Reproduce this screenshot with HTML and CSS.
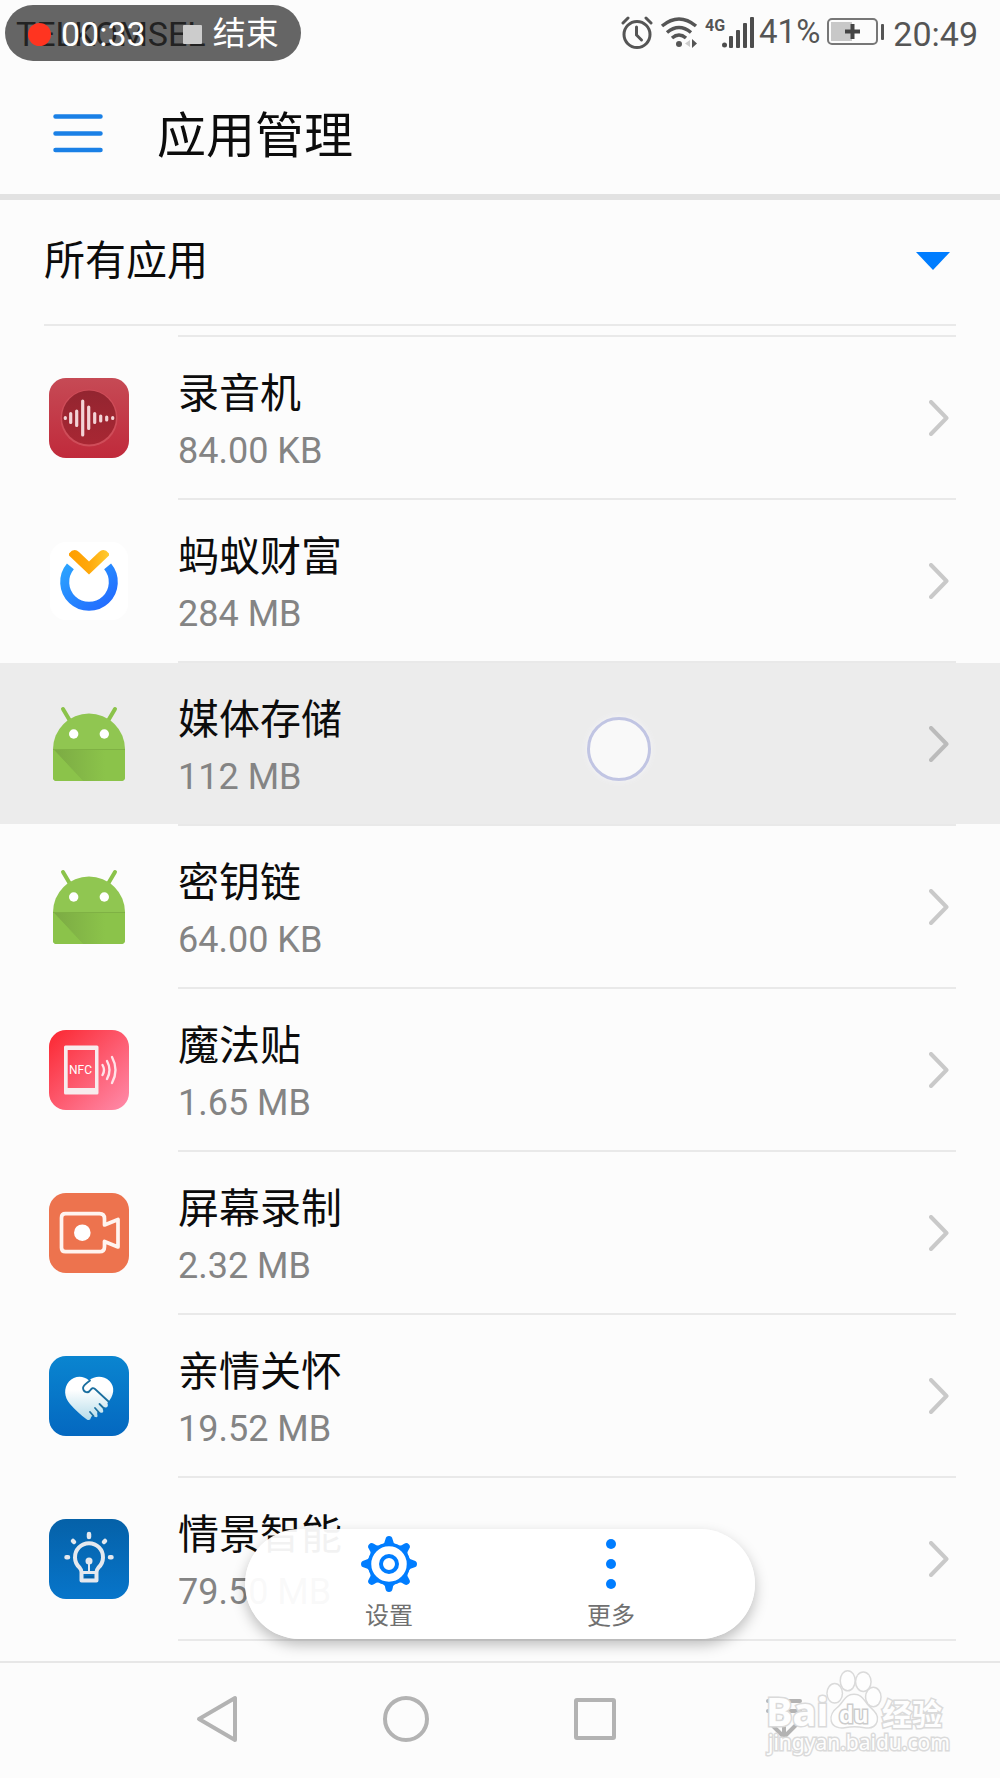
FILE: index.html
```html
<!DOCTYPE html>
<html lang="zh-CN">
<head>
<meta charset="utf-8">
<meta name="viewport" content="width=device-width, initial-scale=1">
<title>应用管理</title>
<link rel="stylesheet" href="styles.css">
</head>
<body>
<svg class="defs" width="0" height="0" aria-hidden="true">
  <defs>
    <linearGradient id="rec" x1="0" y1="0" x2="0" y2="1"><stop offset="0" stop-color="#c64a55"/><stop offset="1" stop-color="#c02a3b"/></linearGradient>
    <linearGradient id="recDisc" x1="0" y1="0" x2="0" y2="1"><stop offset="0" stop-color="#932530"/><stop offset="1" stop-color="#a82733"/></linearGradient>
    <linearGradient id="ring" x1="0" y1="0" x2="1" y2="1"><stop offset="0" stop-color="#2ba3ff"/><stop offset="1" stop-color="#2268ff"/></linearGradient>
    <linearGradient id="vee" x1="0" y1="0" x2="1" y2="0"><stop offset="0" stop-color="#ff9e00"/><stop offset=".5" stop-color="#ffa80a"/><stop offset="1" stop-color="#ffcb30"/></linearGradient>
    <linearGradient id="fold" x1="0" y1="0" x2="1" y2="0"><stop offset="0" stop-color="#7aa843"/><stop offset="1" stop-color="#8bc34a"/></linearGradient>
    <linearGradient id="nfc" x1="0" y1="0" x2="1" y2="1"><stop offset="0" stop-color="#fb2630"/><stop offset="1" stop-color="#ff8cab"/></linearGradient>
    <linearGradient id="care" x1="0" y1="0" x2="0" y2="1"><stop offset="0" stop-color="#0a85d0"/><stop offset="1" stop-color="#0468c0"/></linearGradient>
    <linearGradient id="hand" x1="0" y1="0" x2="0" y2="1"><stop offset=".3" stop-color="#fff"/><stop offset="1" stop-color="#b5dcea"/></linearGradient>
    <linearGradient id="smart" x1="0" y1="0" x2="0" y2="1"><stop offset="0" stop-color="#0561a8"/><stop offset="1" stop-color="#0775ca"/></linearGradient>
    <symbol id="chevron" viewBox="0 0 20 36"><path d="M2 2l15.500 16L2 34" fill="none" stroke="currentColor" stroke-width="4" stroke-linecap="round" stroke-linejoin="round"/></symbol>
    <symbol id="android" viewBox="0 0 80 80">
      <path d="M14 5l6.500 11M66 5l-6.500 11" stroke="#8bc34a" stroke-width="4" stroke-linecap="round"/>
      <path d="M4 45a36 35.500 0 0 1 72 0v28q0 4-4 4H8q-4 0-4-4z" fill="#90c651"/>
      <path d="M4 46h72v27q0 4-4 4H8q-4 0-4-4z" fill="#8bc34a"/>
      <path d="M5 46l29 31h22V46z" fill="url(#fold)" opacity=".9"/>
      <path d="M5 46l29 31H8q-4 0-4-4V46z" fill="#8bc34a"/>
      <path d="M4 45.500h72" stroke="#7fb144"/>
      <circle cx="24.700" cy="30" r="4.700" fill="#fff"/><circle cx="55.300" cy="30" r="4.700" fill="#fff"/>
    </symbol>
  </defs>
</svg>

<div class="status">
  <span class="carrier">TELKOMSEL</span>
  <div class="recorder">
    <span class="rec-dot"></span>
    <span>00:33</span>
    <button class="rec-stop" type="button"><span class="rec-square"></span>结束</button>
  </div>
  <div class="indicators">
    <svg width="32" height="34" viewBox="0 0 32 34" fill="none" stroke="#555" aria-label="闹钟">
      <circle cx="16" cy="19.500" r="13" stroke-width="3"/>
      <path d="M15.500 12v8l5 5" stroke-width="3" stroke-linecap="round"/>
      <path d="M2 8l5-5M30 8l-5-5" stroke-width="3" stroke-linecap="round"/>
    </svg>
    <svg width="38" height="34" viewBox="0 0 38 34" fill="none" stroke="#555" stroke-width="3.500" aria-label="WLAN">
      <path d="M2 11q17-14 34 0M7 17.500q12-10 24 0M12 23q7-6 14 0"/>
      <circle cx="19" cy="29" r="3" fill="#555" stroke="none"/>
      <path d="M32 24v9l5-4.500z" fill="#555" stroke="none"/><path d="M30 25v7l-5-3.500z" fill="#ccc" stroke="none"/>
    </svg>
    <div class="mobile">
      <svg width="50" height="34" viewBox="0 0 50 34" aria-label="信号">
        <text x="0" y="16" class="net">4G</text>
        <g fill="#4d4d4d"><circle cx="19.500" cy="30" r="2.500"/><rect x="24" y="21" width="4" height="12" rx="1"/><rect x="31" y="15" width="4" height="18" rx="1"/><rect x="38" y="8" width="4" height="25" rx="1"/><rect x="45" y="2" width="4" height="31" rx="1"/></g>
      </svg>
      <span class="percent">41%</span>
    </div>
    <svg width="58" height="28" viewBox="0 0 58 28" aria-label="充电中">
      <rect x="1" y="1" width="49" height="25" rx="4" fill="none" stroke="#777" stroke-width="2"/>
      <rect x="4" y="4" width="21" height="19" fill="#c8c8c8"/>
      <path d="M18 13.500h15M25.500 6v15" stroke="#444" stroke-width="4"/>
      <rect x="54" y="6" width="3" height="16" rx="1" fill="#555"/>
    </svg>
  </div>
  <time class="clock">20:49</time>
</div>

<header class="header">
  <button class="menu" type="button" aria-label="菜单">
    <svg width="50" height="40" viewBox="0 0 50 40" stroke="#1a80e6" stroke-width="4.500" stroke-linecap="round"><path d="M2.500 3.500h45M2.500 20.500h45M2.500 37h45"/></svg>
  </button>
  <h1>应用管理</h1>
</header>

<main class="content">
  <div class="filter">
    <select aria-label="应用筛选"><option>所有应用</option></select>
    <svg class="caret" width="34" height="18" viewBox="0 0 34 18"><path d="M0 0h34L17 18z" fill="#007dff"/></svg>
  </div>

  <ul class="apps">
    <li>
      <a class="app" href="#">
        <svg class="icon" viewBox="0 0 80 80">
          <rect width="80" height="80" rx="17" fill="url(#rec)"/>
          <circle cx="40" cy="40" r="28.500" fill="#cf4d59"/>
          <circle cx="40" cy="39.500" r="27" fill="url(#recDisc)"/>
          <path d="M16.300 39.500v1M21.700 35.500v9M27.700 33v14.500M33.700 23v34M39.700 29v21.500M45.700 35.500v9M51.700 38v5M57.700 39v3M63.700 39.500v1" stroke="#f3d3d6" stroke-width="3.200" stroke-linecap="round"/>
        </svg>
        <span class="text"><span class="name">录音机</span><span class="size">84.00 KB</span></span>
        <svg class="chevron"><use href="#chevron"/></svg>
      </a>
    </li>
    <li>
      <a class="app" href="#">
        <svg class="icon" viewBox="0 0 80 80">
          <rect x="1" y="1" width="78" height="78" rx="16" fill="#fff"/>
          <path d="M21.400 25.400A24.300 24.300 0 1 0 58.600 25.400" fill="none" stroke="url(#ring)" stroke-width="9"/>
          <path d="M20 12.500q5-6 10-1.500L40 20.500 50 11q5-4.500 10 1.500v2L40 33.500 20 14.500z" fill="url(#vee)"/>
        </svg>
        <span class="text"><span class="name">蚂蚁财富</span><span class="size">284 MB</span></span>
        <svg class="chevron"><use href="#chevron"/></svg>
      </a>
    </li>
    <li>
      <a class="app pressed" href="#">
        <svg class="icon"><use href="#android"/></svg>
        <span class="text"><span class="name">媒体存储</span><span class="size">112 MB</span></span>
        <svg class="chevron"><use href="#chevron"/></svg>
        <span class="touch"></span>
      </a>
    </li>
    <li>
      <a class="app" href="#">
        <svg class="icon"><use href="#android"/></svg>
        <span class="text"><span class="name">密钥链</span><span class="size">64.00 KB</span></span>
        <svg class="chevron"><use href="#chevron"/></svg>
      </a>
    </li>
    <li>
      <a class="app" href="#">
        <svg class="icon" viewBox="0 0 80 80">
          <rect width="80" height="80" rx="17" fill="url(#nfc)"/>
          <path d="M16.500 15.500h31.500q1.500 0 1.500 1.500v46q0 1.500-1.500 1.500H16.500q-1.500 0-1.500-1.500V17q0-1.500 1.500-1.500zM18.700 20v38h27.300V20z" fill="#f7ecee" fill-rule="evenodd"/>
          <text x="20" y="44" class="nfc">NFC</text>
          <g fill="none" stroke="#ffe3e8" stroke-width="2.400" stroke-linecap="round"><path d="M53.500 35q3 5 0 10M58 31q5 9 0 18M63 27q7 13 0 26"/></g>
        </svg>
        <span class="text"><span class="name">魔法贴</span><span class="size">1.65 MB</span></span>
        <svg class="chevron"><use href="#chevron"/></svg>
      </a>
    </li>
    <li>
      <a class="app" href="#">
        <svg class="icon" viewBox="0 0 80 80">
          <rect width="80" height="80" rx="17" fill="#ed734e"/>
          <path d="M16.500 20.700h34q5 0 5 5v6.300l13.500-5.500v27.500l-13.500-5.500v5.200q0 5-5 5h-34q-4 0-4-4v-30q0-4 4-4z" fill="none" stroke="#fff4ef" stroke-width="3.700" stroke-linejoin="round"/>
          <circle cx="33.300" cy="39.700" r="8.300" fill="#fff"/>
        </svg>
        <span class="text"><span class="name">屏幕录制</span><span class="size">2.32 MB</span></span>
        <svg class="chevron"><use href="#chevron"/></svg>
      </a>
    </li>
    <li>
      <a class="app" href="#">
        <svg class="icon" viewBox="0 0 80 80">
          <rect width="80" height="80" rx="17" fill="url(#care)"/>
          <path d="M40 24.500C34 19 25 20 20 25.500 14.500 32 15 41 21 48c5 6 11 11 16.500 15.200q3.500 2.300 4.500-1.700 1-3 3.500-.7 4 1.700 2.700-2.700-.5-3.500 3-1.600 4.300 1.200 2.600-3.200-.4-2.800 2.600-1.800 3.600-.2 2-4.500C65 40 66.500 31 60.500 25 54.500 19.500 46 19.500 40 24.500z" fill="url(#hand)"/>
          <path d="M41 24.500C38 27 34.500 28.500 34 32c.5 5 5.500 5.500 7.500 2q1.800-3 4.500-1L59.500 45.500M41 56l3.500 4M46 52l4 4.500M50.500 48l4.500 4.500" fill="none" stroke="#1b6f9f" stroke-width="1.800" stroke-linecap="round"/>
        </svg>
        <span class="text"><span class="name">亲情关怀</span><span class="size">19.52 MB</span></span>
        <svg class="chevron"><use href="#chevron"/></svg>
      </a>
    </li>
    <li>
      <a class="app" href="#">
        <svg class="icon" viewBox="0 0 80 80">
          <rect width="80" height="80" rx="17" fill="url(#smart)"/>
          <path d="M32.500 61.500V53q0-2-2-4.500a14 14 0 1 1 19 0q-2 2.500-2 4.500v8.500z" fill="none" stroke="#e4e8ee" stroke-width="4" stroke-linejoin="round"/>
          <path d="M34 53.500h12" stroke="#e4e8ee" stroke-width="3"/>
          <path d="M35.500 58h9" stroke="#0a5fa3" stroke-width="2"/>
          <path d="M40 42v11" stroke="#e4e8ee" stroke-width="2"/><circle cx="40" cy="42" r="3.500" fill="#e4e8ee"/>
          <path d="M40 15v3M24 22l1 1M56 22l-1 1M17.500 38.300h1.500M61 38.300h1.500" stroke="#e4e8ee" stroke-width="4.500" stroke-linecap="round"/>
        </svg>
        <span class="text"><span class="name">情景智能</span><span class="size">79.50 MB</span></span>
        <svg class="chevron"><use href="#chevron"/></svg>
      </a>
    </li>
  </ul>

  <div class="toolbar">
    <button type="button">
      <svg width="56" height="56" viewBox="-28 -28 56 56">
        <g fill="#007dff">
          <g id="teeth"><path id="tooth" d="M-7-19q3-2 3.500-6 .5-3 3.500-3t3.500 3q.5 4 3.500 6z"/><use href="#tooth" transform="rotate(90)"/><use href="#tooth" transform="rotate(180)"/><use href="#tooth" transform="rotate(270)"/></g>
          <use href="#teeth" transform="rotate(45)"/>
        </g>
        <circle r="19.500" fill="#fff" stroke="#007dff" stroke-width="3.500"/>
        <circle r="8" fill="none" stroke="#007dff" stroke-width="4"/>
      </svg>
      设置
    </button>
    <button type="button">
      <svg width="56" height="56" viewBox="-28 -28 56 56" fill="#007dff"><circle cy="-20" r="5"/><circle r="5"/><circle cy="20" r="5"/></svg>
      更多
    </button>
  </div>
</main>

<nav class="nav">
  <button type="button" aria-label="返回"><svg width="48" height="48" viewBox="0 0 48 48"><path d="M42 3v42L6 24z"/></svg></button>
  <button type="button" aria-label="主屏幕"><svg width="48" height="48" viewBox="0 0 48 48"><circle cx="24" cy="24" r="21"/></svg></button>
  <button type="button" aria-label="最近任务"><svg width="48" height="48" viewBox="0 0 48 48"><rect x="5" y="5" width="38" height="38" rx="1"/></svg></button>
  <button type="button" aria-label="通知栏"><svg width="48" height="48" viewBox="0 0 48 48"><path d="M8 6h32M8 16h32M24 24v18M11 29l13 13 13-13"/></svg></button>
  <svg class="watermark" width="190" height="94" viewBox="0 0 190 94">
    <text x="4" y="58" class="wm-bai">Bai</text>
    <ellipse cx="72.700" cy="25.300" rx="7" ry="9"/><ellipse cx="85.700" cy="12.700" rx="6.700" ry="9.300"/><ellipse cx="101.300" cy="13.700" rx="7" ry="9"/><ellipse cx="111.300" cy="29" rx="7" ry="9"/>
    <path d="M92 27c8 0 9 6 15 12 5 5 9 8 7.500 14-1.500 5-6 7-12 6-7-1.300-13-1.300-20 0-6 1-11-1-12.500-6-1.500-6 2-10 7-14 6-6 7-12 15-12z"/>
    <text x="77" y="55" class="wm-du">du</text>
    <text x="120" y="57" class="wm-cn">经验</text>
    <text x="6" y="82" class="wm-url">jingyan.baidu.com</text>
  </svg>
</nav>
</body>
</html>
```
FILE: styles.css
```css
* { box-sizing: border-box; }

body {
  margin: 0;
  background: #fcfcfc;
  color: #0c0c0c;
  font-family: Roboto, "Noto Sans CJK SC", sans-serif;
}

button {
  margin: 0;
  padding: 0;
  border: 0;
  background: none;
  color: inherit;
  font: inherit;
  cursor: pointer;
}

svg { display: block; flex: none; }
.defs { position: absolute; }

/* Status bar */
.status {
  position: relative;
  display: flex;
  align-items: center;
  height: 72px;
  padding: 0 22px 4px 16px;
  font-size: 34px;
  line-height: 40px;
  color: #555;
}
.carrier { margin-right: auto; }
.indicators {
  display: flex;
  align-items: center;
  gap: 7px;
  padding-bottom: 4px;
}
.mobile { display: flex; align-items: center; gap: 4px; }
.net { font: 700 16px Roboto, sans-serif; fill: #555; }
.percent { font-size: 33px; }
.clock { margin-left: 8px; }

.recorder {
  position: absolute;
  top: 5px;
  left: 5px;
  display: flex;
  align-items: center;
  width: 296px;
  height: 56px;
  padding: 2px 0 0 23px;
  border-radius: 28px;
  background: rgba(0, 0, 0, .6);
  color: #fff;
}
.rec-dot {
  width: 23px;
  height: 23px;
  margin-right: 10px;
  border-radius: 50%;
  background: #ff3420;
}
.rec-stop {
  display: flex;
  align-items: center;
  gap: 11px;
  margin-left: 37px;
  font-size: 33px;
}
.rec-square {
  width: 19px;
  height: 19px;
  border-radius: 1px;
  background: #ccc;
}

/* Title bar */
.header {
  display: flex;
  align-items: center;
  gap: 54px;
  height: 128px;
  padding: 0 53px;
  border-bottom: 6px solid #e2e2e2;
}
h1 {
  margin: 0;
  padding-top: 8px;
  font-size: 49px;
  font-weight: 400;
  line-height: 60px;
}

/* Filter */
.content { position: relative; padding-bottom: 20px; }
.filter {
  position: relative;
  display: flex;
  align-items: center;
  height: 126px;
  margin: 0 44px 9px;
  padding-bottom: 2px;
  border-bottom: 2px solid #e9e9e9;
}
.filter select {
  flex: 1;
  height: 100%;
  padding: 0;
  border: 0;
  background: none;
  color: inherit;
  font: inherit;
  font-size: 41px;
  appearance: none;
}
.caret {
  position: absolute;
  right: 6px;
  pointer-events: none;
}

/* App list */
.apps { margin: 0; padding: 0; list-style: none; }
.apps::before,
.apps li::after {
  content: "";
  display: block;
  height: 2px;
  margin: 0 44px 0 178px;
  background: #e9e9e9;
}
.app {
  position: relative;
  display: flex;
  align-items: center;
  min-height: 161px;
  padding: 0 51px 0 49px;
  color: inherit;
  text-decoration: none;
}
.pressed { background: #ececec; }
.icon {
  width: 80px;
  height: 81px;
  padding-top: 1px;
}
.text {
  display: flex;
  flex: 1;
  flex-direction: column;
  gap: 1px;
  margin-left: 49px;
  padding-top: 10px;
  line-height: 56px;
}
.name { font-size: 41px; }
.size { font-size: 36px; color: #848484; }
.chevron {
  width: 20px;
  height: 37px;
  padding-top: 1px;
  color: #c9c9c9;
}
.pressed .chevron { color: #bbb; }
.nfc { font: 12px Roboto, sans-serif; fill: #fff; }
.touch {
  position: absolute;
  top: 54px;
  left: calc(62% - 33px);
  width: 64px;
  height: 64px;
  border: 3px solid #c1c5e3;
  border-radius: 50%;
  background: #f9f9f9;
  box-shadow: 0 0 6px #f4f4f8;
}

/* Floating actions */
.toolbar {
  position: absolute;
  right: 0;
  bottom: 22px;
  left: 0;
  display: grid;
  grid-template-columns: 1fr 1fr;
  width: 510px;
  height: 110px;
  margin: 0 auto;
  padding: 7px 33px 0;
  border-radius: 55px;
  background: rgba(255, 255, 255, .95);
  box-shadow: 0 6px 14px rgba(0, 0, 0, .25);
}
.toolbar button {
  display: flex;
  flex-direction: column;
  align-items: center;
  gap: 8px;
  font-size: 24px;
  line-height: 32px;
  color: #707070;
}

/* System navigation */
.nav {
  position: relative;
  display: grid;
  grid-template-columns: repeat(4, 1fr);
  height: 117px;
  padding: 0 122px 3px;
  border-top: 2px solid #e7e7e7;
}
.nav button { display: grid; place-items: center; }
.nav button svg {
  fill: none;
  stroke: #b3b3b3;
  stroke-width: 4;
  stroke-linecap: round;
  stroke-linejoin: round;
}
.watermark {
  position: absolute;
  top: 5px;
  right: 48px;
  fill: #fefefe;
  stroke: #dadada;
  stroke-width: 3;
  paint-order: stroke;
  pointer-events: none;
}
.wm-bai { font: 700 40px "Noto Sans", sans-serif; }
.wm-du { font: 700 23px "Noto Sans", sans-serif; stroke: #ccc; }
.wm-cn { font: 700 30px "Noto Sans CJK SC", sans-serif; }
.wm-url { font: 21px "Noto Sans", sans-serif; }
```
